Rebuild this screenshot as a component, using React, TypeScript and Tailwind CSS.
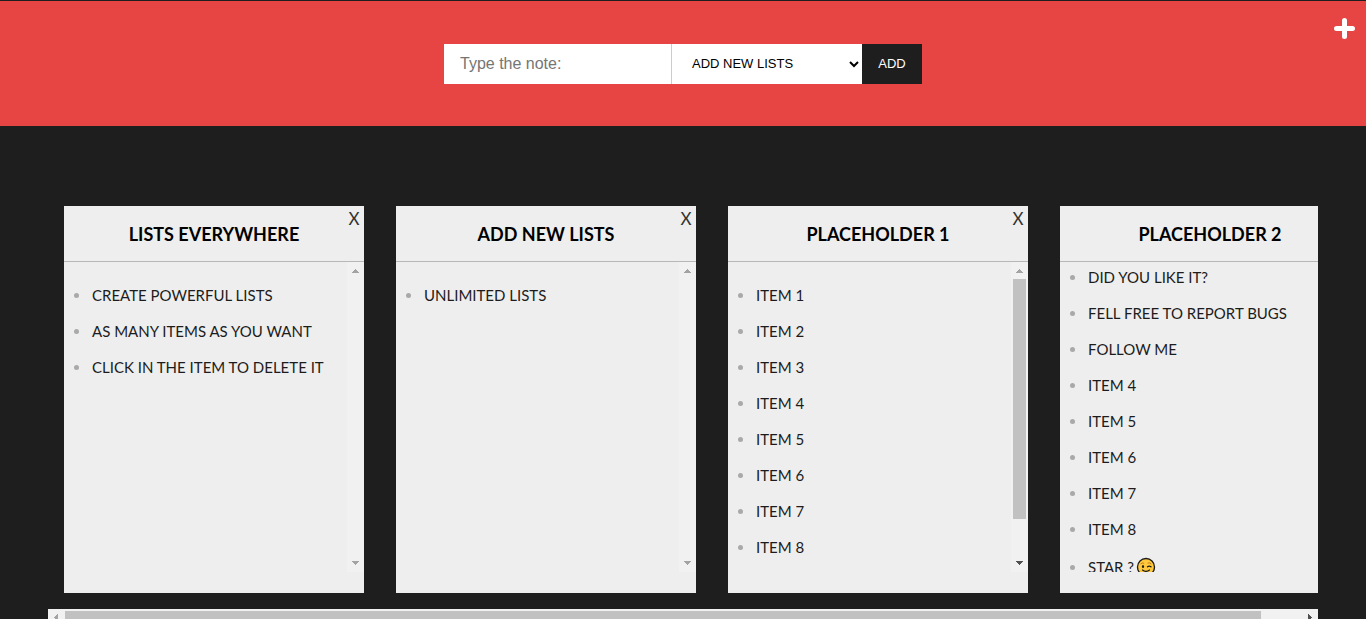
import { FormEvent, ReactNode, useEffect, useRef, useState } from "react";

type Item = { id: number; text: string; wink?: boolean };
type Board = { title: string; items: Item[]; scroll: "idle" | "active" | "none"; scrollTop?: number };

let nextId = 0;
const toItems = (texts: string[]): Item[] => texts.map((text) => ({ id: nextId++, text }));

const initialBoards: Board[] = [
  {
    title: "LISTS EVERYWHERE",
    scroll: "idle",
    items: toItems(["CREATE POWERFUL LISTS", "AS MANY ITEMS AS YOU WANT", "CLICK IN THE ITEM TO DELETE IT"]),
  },
  { title: "ADD NEW LISTS", scroll: "idle", items: toItems(["UNLIMITED LISTS"]) },
  {
    title: "PLACEHOLDER 1",
    scroll: "active",
    items: toItems(["ITEM 1", "ITEM 2", "ITEM 3", "ITEM 4", "ITEM 5", "ITEM 6", "ITEM 7", "ITEM 8"]),
  },
  {
    title: "PLACEHOLDER 2",
    scroll: "none",
    scrollTop: 18,
    items: [
      ...toItems(["DID YOU LIKE IT?", "FELL FREE TO REPORT BUGS", "FOLLOW ME", "ITEM 4", "ITEM 5", "ITEM 6", "ITEM 7", "ITEM 8"]),
      { id: nextId++, text: "STAR ?", wink: true },
    ],
  },
];

function Arrow({ children, className }: { children: ReactNode; className: string }) {
  return (
    <svg viewBox="0 0 17 17" className={`size-[17px] shrink-0 ${className}`} shapeRendering="crispEdges" fill="currentColor" aria-hidden="true">
      {children}
    </svg>
  );
}

function VerticalBar({ active }: { active: boolean }) {
  return (
    <div className="flex w-[17px] shrink-0 flex-col justify-between bg-[#f1f1f1]" aria-hidden="true">
      <Arrow className="text-[#a3a3a3]">
        <path d="M8 7h1v1h1v1h1v1h1v1H5v-1h1V9h1V8h1z" />
      </Arrow>
      {active && (
        <div className="flex flex-1 flex-col px-[2px]">
          <div className="basis-[87%] bg-[#c1c1c1]" />
        </div>
      )}
      <Arrow className={active ? "text-[#505050]" : "text-[#a3a3a3]"}>
        <path d="M5 6h7v1h-1v1h-1v1H9v1H8V9H7V8H6V7H5z" />
      </Arrow>
    </div>
  );
}

function Wink() {
  return (
    <svg viewBox="0 0 20 20" className="ml-0.5 size-5" role="img" aria-label="Winking face">
      <circle cx="10" cy="10" r="8.5" fill="#ffc83d" stroke="#1c1c1c" strokeWidth="1.3" />
      <ellipse cx="7" cy="9.5" rx="1.1" ry="1.6" fill="#1c1c1c" />
      <path d="M4.800 6.700q1.500-1.400 3-.6M12 6q1.600-.8 3 .5" fill="none" stroke="#c27b1c" strokeWidth="1" strokeLinecap="round" />
      <path d="M11.500 9.800q1.700-1.500 3.500 0M6.500 13q3.500 2.800 7 0" fill="none" stroke="#1c1c1c" strokeWidth="1.200" strokeLinecap="round" />
    </svg>
  );
}

function Card({ board, onClose, onDelete }: { board: Board; onClose: () => void; onDelete: (id: number) => void }) {
  const list = useRef<HTMLUListElement>(null);

  useEffect(() => {
    if (list.current) list.current.scrollTop = board.scrollTop ?? 0;
  }, []);

  return (
    <article className="flex h-[387px] w-[300px] shrink-0 flex-col bg-[#eee] pb-[21px]">
      <header className="relative flex h-14 shrink-0 items-center justify-center border-b border-[#b5b8b5]">
        <h2 className="text-[18px] leading-6 font-bold text-black">{board.title}</h2>
        <button type="button" onClick={onClose} aria-label={`Close ${board.title}`} className="absolute top-[3px] right-1 w-3 text-center text-[17px] leading-5 text-[#333]">
          X
        </button>
      </header>
      <div className="flex min-h-0 flex-1">
        <ul ref={list} className="flex-1 overflow-y-auto pt-[15px] [scrollbar-width:none]">
          {board.items.map((item) => (
            <li key={item.id} className={item.wink ? "h-10" : "h-9"}>
              <button type="button" onClick={() => onDelete(item.id)} className="flex h-full w-full items-center text-left text-[15px] leading-5 text-[#1c1c1c]">
                <span className="mr-[13px] ml-[10px] size-[5px] rounded-full bg-[#a9a9a9]" />
                {item.text}
                {item.wink && <Wink />}
              </button>
            </li>
          ))}
        </ul>
        {board.scroll !== "none" && <VerticalBar active={board.scroll === "active"} />}
      </div>
    </article>
  );
}

export default function App() {
  const [boards, setBoards] = useState(initialBoards);
  const [note, setNote] = useState("");
  const [target, setTarget] = useState("ADD NEW LISTS");

  const addNote = (event: FormEvent) => {
    event.preventDefault();
    if (!note.trim()) return;
    setBoards(boards.map((b) => (b.title === target ? { ...b, items: [...b.items, { id: nextId++, text: note.toUpperCase() }] } : b)));
    setNote("");
  };

  return (
    <div className="h-screen overflow-hidden bg-[#1e1e1e] pt-px font-['Lato',sans-serif]">
      <header className="relative flex h-[125px] items-center justify-center bg-[#e64543]">
        <form onSubmit={addNote} className="flex h-10 font-['Liberation_Sans',Arial,sans-serif]">
          <input
            type="text"
            aria-label="Note"
            placeholder="Type the note:"
            value={note}
            onChange={(e) => setNote(e.target.value)}
            className="w-[228px] border-r border-[#ccc] bg-white px-4 text-[16px] outline-none placeholder:text-[#757575]"
          />
          <select
            aria-label="List"
            value={target}
            onChange={(e) => setTarget(e.target.value)}
            className="w-[190px] bg-white pl-4 text-[13px] text-black outline-none"
          >
            {boards.map((b) => (
              <option key={b.title}>{b.title}</option>
            ))}
          </select>
          <button type="submit" className="w-[60px] bg-[#1e1e1e] text-[13px] text-white">
            ADD
          </button>
        </form>
        <button type="button" aria-label="New list" className="absolute top-[17px] right-[11px] text-white">
          <svg viewBox="0 0 21 21" className="size-[21px]" stroke="currentColor" strokeWidth="5" strokeLinecap="round" aria-hidden="true">
            <path d="M10.500 2.500v16M2.500 10.500h16" />
          </svg>
        </button>
      </header>
      <main className="mx-12 mt-16">
        <div className="flex gap-8 overflow-x-auto p-4 [scrollbar-width:none]">
          {boards.map((board) => (
            <Card
              key={board.title}
              board={board}
              onClose={() => setBoards(boards.filter((b) => b !== board))}
              onDelete={(id) => setBoards(boards.map((b) => (b.title === board.title ? { ...b, items: b.items.filter((i) => i.id !== id) } : b)))}
            />
          ))}
        </div>
        <div className="flex h-[17px] bg-[#f1f1f1]" aria-hidden="true">
          <Arrow className="text-[#a3a3a3]">
            <path d="M6 8h1V7h1V6h1V5h1v7H9v-1H8v-1H7V9H6z" />
          </Arrow>
          <div className="flex flex-1 py-[2px]">
            <div className="w-[96.8%] bg-[#c1c1c1]" />
          </div>
          <Arrow className="text-[#505050]">
            <path d="M7 5h1v1h1v1h1v1h1v1h-1v1H9v1H8v1H7z" />
          </Arrow>
        </div>
      </main>
    </div>
  );
}
